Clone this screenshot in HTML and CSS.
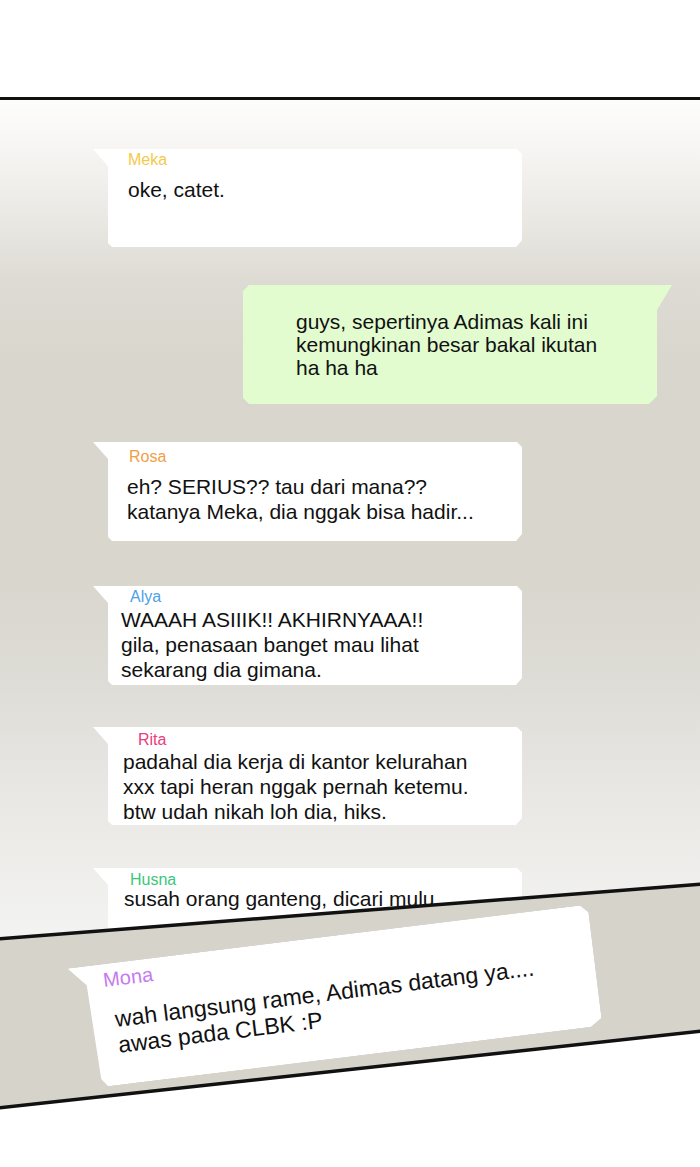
FILE: index.html
```html
<!DOCTYPE html>
<html lang="id">
<head>
<meta charset="utf-8">
<title>Grup chat</title>
<link rel="stylesheet" href="styles.css">
</head>
<body>
<div class="page">
  <div class="gap-top"></div>

  <section class="panel panel-chat">
    <div class="bubble left b-meka">
      <div class="name name-meka">Meka</div>
      <div class="msg">oke, catet.</div>
    </div>

    <div class="bubble mine b-mine">
      <div class="msg">guys, sepertinya Adimas kali ini<br>kemungkinan besar bakal ikutan<br>ha ha ha</div>
    </div>

    <div class="bubble left b-rosa">
      <div class="name name-rosa">Rosa</div>
      <div class="msg">eh? SERIUS?? tau dari mana??<br>katanya Meka, dia nggak bisa hadir...</div>
    </div>

    <div class="bubble left b-alya">
      <div class="name name-alya">Alya</div>
      <div class="msg">WAAAH ASIIIK!! AKHIRNYAAA!!<br>gila, penasaan banget mau lihat<br>sekarang dia gimana.</div>
    </div>

    <div class="bubble left b-rita">
      <div class="name name-rita">Rita</div>
      <div class="msg">padahal dia kerja di kantor kelurahan<br>xxx tapi heran nggak pernah ketemu.<br>btw udah nikah loh dia, hiks.</div>
    </div>

    <div class="bubble left b-husna">
      <div class="name name-husna">Husna</div>
      <div class="msg">susah orang ganteng, dicari mulu</div>
    </div>
  </section>

  <section class="panel panel-mona">
    <div class="bubble b-mona">
      <div class="name name-mona">Mona</div>
      <div class="msg">wah langsung rame, Adimas datang ya....<br>awas pada CLBK :P</div>
    </div>
  </section>

  <svg class="borders" width="700" height="1167" viewBox="0 0 700 1167" aria-hidden="true">
    <line x1="-2" y1="939" x2="702" y2="884" stroke="#111" stroke-width="3.5"/>
    <line x1="-2" y1="1108" x2="702" y2="1031" stroke="#111" stroke-width="3.5"/>
  </svg>
</div>
</body>
</html>
```

FILE: styles.css
```css
* {
  box-sizing: border-box;
}

html, body {
  margin: 0;
  padding: 0;
  background: #ffffff;
}

body {
  width: 700px;
  height: 1167px;
  overflow: hidden;
  font-family: "Liberation Sans", Arial, sans-serif;
  color: #111;
}

.page {
  position: relative;
  width: 700px;
  height: 1167px;
}

.gap-top {
  height: 97px;
}

/* ---------- panel 1 : chat list ---------- */
.panel-chat {
  height: 848px;
  border-top: 3px solid #111;
  background: linear-gradient(to bottom,
    #fdfdfc 0px,
    #f6f5f3 50px,
    #e9e8e3 120px,
    #dedbd4 180px,
    #d9d6ce 260px,
    #d9d6ce 480px,
    #dedcd6 580px,
    #e9e8e5 700px,
    #f4f4f2 848px);
  clip-path: polygon(0 0, 100% 0, 100% 790px, 0 845px);
  display: flex;
  flex-direction: column;
  align-items: flex-start;
  overflow: hidden;
}

.bubble {
  background: #ffffff;
  flex-shrink: 0;
}

.left {
  width: 429px;
  margin-left: 93px;
  clip-path: polygon(0 0, calc(100% - 5px) 0, 100% 5px, 100% calc(100% - 7px),
    calc(100% - 6px) 100%, 19px 100%, 15px calc(100% - 4px), 15px 17px);
}

.name {
  font-size: 16px;
  line-height: 18px;
}

.msg {
  font-size: 21px;
  line-height: 25px;
}

.name-meka { color: #f5c94a; }
.name-rosa { color: #f0a044; }
.name-alya { color: #4da0e6; }
.name-rita { color: #e8407c; }
.name-husna { color: #3cc67c; }
.name-mona { color: #c67af0; }

.b-meka {
  margin-top: 49px;
  height: 98px;
  padding-top: 2px;
}
.b-meka .name { padding-left: 35px; margin-bottom: 8px; }
.b-meka .msg { padding-left: 35px; }

.mine {
  width: 429px;
  margin-left: 243px;
  margin-top: 38px;
  height: 119px;
  padding: 25px 0 0 53px;
  background: #e2fbcf;
  clip-path: polygon(6px 0, 100% 0, calc(100% - 15px) 25px, calc(100% - 15px) calc(100% - 8px),
    calc(100% - 23px) 100%, 6px 100%, 0 calc(100% - 6px), 0 6px);
}
.mine .msg {
  line-height: 23px;
}

.b-rosa {
  margin-top: 38px;
  height: 99px;
  padding-top: 6px;
}
.b-rosa .name { padding-left: 36px; margin-bottom: 8px; }
.b-rosa .msg { padding-left: 34px; }

.b-alya {
  margin-top: 45px;
  height: 99px;
  padding-top: 2px;
}
.b-alya .name { padding-left: 37px; margin-bottom: 1px; }
.b-alya .msg { padding-left: 28px; }

.b-rita {
  margin-top: 42px;
  height: 98px;
  padding-top: 4px;
}
.b-rita .name { padding-left: 45px; }
.b-rita .msg { padding-left: 30px; }

.b-husna {
  margin-top: 43px;
  height: 100px;
  padding-top: 3px;
}
.b-husna .name { padding-left: 37px; margin-bottom: -3px; }
.b-husna .msg { padding-left: 31px; }

/* ---------- panel 2 : Mona ---------- */
.panel-mona {
  margin-top: -64px;
  height: 288px;
  background: #d6d3ca;
  clip-path: polygon(0 58px, 100% 3px, 100% 150px, 0 227px);
  padding-top: 55px;
}

.b-mona {
  width: 524px;
  height: 122px;
  margin-left: 73px;
  padding-top: 5px;
  transform: rotate(-7deg);
  clip-path: polygon(0 0, calc(100% - 8px) 0, 100% 8px, 100% calc(100% - 8px),
    calc(100% - 12px) 100%, 26px 100%, 20px calc(100% - 8px), 17px 19px);
}
.b-mona .name {
  font-size: 20px;
  line-height: 22px;
  padding-left: 34px;
  margin-bottom: 16px;
}
.b-mona .msg {
  font-size: 23px;
  line-height: 26px;
  padding-left: 41px;
}

.borders {
  position: absolute;
  left: 0;
  top: 0;
  pointer-events: none;
}
```
